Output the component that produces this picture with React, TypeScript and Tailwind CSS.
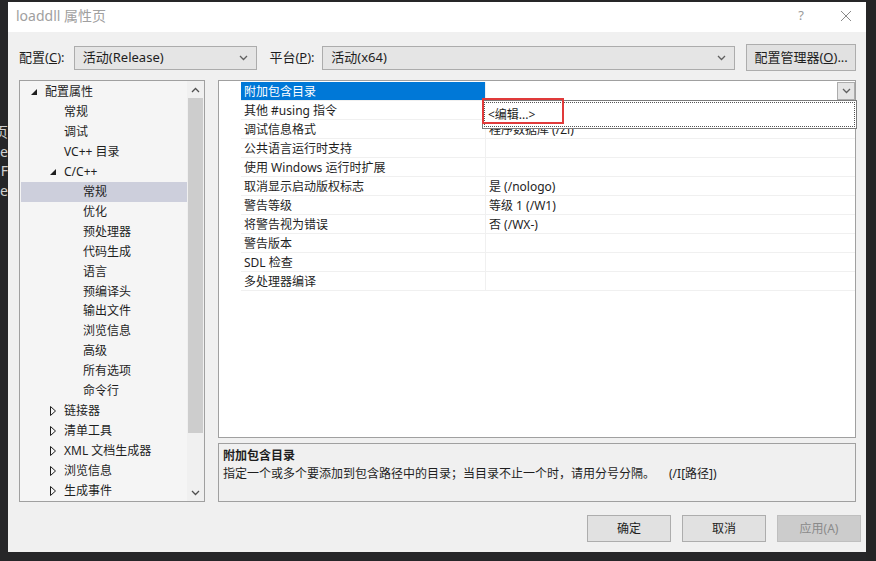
import type { ReactNode } from 'react';

const FONT = { fontFamily: '"Noto Sans", "Noto Sans CJK SC", sans-serif' };

type TreeItem = { label: string; level: number; arrow?: 'open' | 'closed'; selected?: boolean };

const treeItems: TreeItem[] = [
  { label: '配置属性', level: 0, arrow: 'open' },
  { label: '常规', level: 1 },
  { label: '调试', level: 1 },
  { label: 'VC++ 目录', level: 1 },
  { label: 'C/C++', level: 1, arrow: 'open' },
  { label: '常规', level: 2, selected: true },
  { label: '优化', level: 2 },
  { label: '预处理器', level: 2 },
  { label: '代码生成', level: 2 },
  { label: '语言', level: 2 },
  { label: '预编译头', level: 2 },
  { label: '输出文件', level: 2 },
  { label: '浏览信息', level: 2 },
  { label: '高级', level: 2 },
  { label: '所有选项', level: 2 },
  { label: '命令行', level: 2 },
  { label: '链接器', level: 1, arrow: 'closed' },
  { label: '清单工具', level: 1, arrow: 'closed' },
  { label: 'XML 文档生成器', level: 1, arrow: 'closed' },
  { label: '浏览信息', level: 1, arrow: 'closed' },
  { label: '生成事件', level: 1, arrow: 'closed' },
];

const props: { name: string; value?: string }[] = [
  { name: '附加包含目录' },
  { name: '其他 #using 指令' },
  { name: '调试信息格式', value: '程序数据库 (/Zi)' },
  { name: '公共语言运行时支持' },
  { name: '使用 Windows 运行时扩展' },
  { name: '取消显示启动版权标志', value: '是 (/nologo)' },
  { name: '警告等级', value: '等级 1 (/W1)' },
  { name: '将警告视为错误', value: '否 (/WX-)' },
  { name: '警告版本' },
  { name: 'SDL 检查' },
  { name: '多处理器编译' },
];

function Chevron({ up = false, color = '#606060' }: { up?: boolean; color?: string }) {
  return (
    <svg width="9" height="6" viewBox="0 0 9 6">
      <polyline
        points={up ? '1,5 4.5,1.5 8,5' : '1,1 4.5,4.5 8,1'}
        fill="none"
        stroke={color}
        strokeWidth="1.3"
      />
    </svg>
  );
}

function Arrow({ kind }: { kind?: 'open' | 'closed' }) {
  if (kind === 'open') {
    return (
      <svg width="6" height="6" viewBox="0 0 6 6">
        <polygon points="6,0 6,6 0,6" fill="#1e1e1e" />
      </svg>
    );
  }
  if (kind === 'closed') {
    return (
      <svg width="6" height="10" viewBox="0 0 6 10">
        <polygon points="0.5,0.5 5.5,5 0.5,9.5" fill="none" stroke="#1e1e1e" strokeWidth="1" />
      </svg>
    );
  }
  return null;
}

function Combo({ text, width }: { text: string; width: string }) {
  return (
    <div
      className={`${width} h-[24px] flex items-center justify-between bg-[#e5e5e5] border border-[#acacac] pl-[8px] pr-[8px] text-[13px] text-[#1e1e1e]`}
    >
      <span>{text}</span>
      <Chevron />
    </div>
  );
}

function Button({ children, disabled = false }: { children: ReactNode; disabled?: boolean }) {
  return (
    <div
      className={`w-[84px] h-[27px] flex items-center justify-center border text-[12px] ${
        disabled
          ? 'bg-[#cccccc] border-[#bfbfbf] text-[#8a8a8a]'
          : 'bg-[#e1e1e1] border-[#adadad] text-[#1e1e1e]'
      }`}
    >
      {children}
    </div>
  );
}

export default function App() {
  return (
    <div className="w-[876px] h-[561px] bg-[#262628] flex overflow-hidden" style={FONT}>
      {/* 背景中的编辑器残影 */}
      <div className="w-[8px] h-full overflow-hidden flex flex-col items-end pt-[122px] text-[14px] text-[#d0d0d0] leading-[19.5px]">
        <span className="whitespace-nowrap">页</span>
        <span className="whitespace-nowrap">ile</span>
        <span className="whitespace-nowrap">F</span>
        <span className="whitespace-nowrap">e</span>
      </div>

      {/* 属性页对话框 */}
      <div className="mt-[2px] w-[858px] h-[550px] bg-[#f0f0f0] flex flex-col">
        <div className="h-[30px] bg-white flex items-center justify-between pl-[8px] pr-[14px] pb-[3px]">
          <span className="text-[14px] text-[#a0a0a0]">loaddll 属性页</span>
          <div className="flex items-center gap-[36px] text-[#9a9a9a]">
            <span className="text-[13px]">?</span>
            <svg width="12" height="12" viewBox="0 0 12 12">
              <path d="M1 1 L11 11 M11 1 L1 11" stroke="#8a8a8a" strokeWidth="1" />
            </svg>
          </div>
        </div>

        {/* 配置 / 平台 */}
        <div className="mt-[12px] h-[27px] flex items-center pl-[11px] pr-[10px] text-[13px] text-[#1e1e1e]">
          <span className="w-[55px]">
            配置(<span className="underline">C</span>):
          </span>
          <Combo text="活动(Release)" width="w-[184px]" />
          <span className="ml-[12px] w-[53px]">
            平台(<span className="underline">P</span>):
          </span>
          <Combo text="活动(x64)" width="w-[414px]" />
          <div className="ml-[11px] w-[110px] h-[27px] flex items-center justify-center bg-[#e1e1e1] border border-[#adadad]">
            配置管理器(<span className="underline">O</span>)...
          </div>
        </div>

        {/* 主体 */}
        <div className="mt-[9px] h-[422px] flex gap-[13px] pl-[11px] pr-[10px] text-[12px] text-[#1e1e1e]">
          {/* 树 */}
          <div className="w-[186px] h-full bg-[#f5f5f5] border border-[#a0a0a0] flex">
            <div className="flex-1 flex flex-col pt-[1px]">
              {treeItems.map((item, i) => (
                <div
                  key={i}
                  className={`h-[20px] flex items-center ml-[1px] ${item.selected ? 'bg-[#cdcfdc]' : ''}`}
                >
                  <div
                    className={`flex items-center justify-center w-[10px] ${
                      item.level === 0 ? 'ml-[8px]' : item.level === 1 ? 'ml-[27px]' : 'ml-[46px]'
                    }`}
                  >
                    <Arrow kind={item.arrow} />
                  </div>
                  <span className="ml-[6px] whitespace-nowrap">{item.label}</span>
                </div>
              ))}
            </div>
            <div className="w-[17px] h-full bg-[#f0f0f0] flex flex-col items-center">
              <div className="h-[17px] flex items-center justify-center">
                <Chevron up color="#505050" />
              </div>
              <div className="w-[15px] h-[335px] bg-[#cdcdcd]" />
              <div className="flex-1" />
              <div className="h-[17px] flex items-center justify-center">
                <Chevron color="#505050" />
              </div>
            </div>
          </div>

          {/* 右侧 */}
          <div className="flex-1 flex flex-col gap-[5px]">
            <div className="relative h-[358px] bg-white border border-[#a0a0a0] flex flex-col pt-[1px]">
              {props.map((p, i) => (
                <div key={i} className="h-[19px] flex">
                  <div className="w-[22px] bg-white" />
                  <div
                    className={`w-[244px] flex items-center pl-[3px] pt-[1px] border-b border-[#f0f0f0] ${
                      i === 0 ? 'bg-[#0078d7] text-white' : ''
                    }`}
                  >
                    {p.name}
                  </div>
                  <div className="flex-1 flex items-center pl-[3px] pt-[1px] border-b border-l border-[#f0f0f0] whitespace-nowrap">
                    {i === 0 ? (
                      <div className="flex-1 h-full flex justify-end">
                        <div className="w-[18px] h-[18px] -mt-[1px] bg-[#e5e5e5] border border-[#acacac] flex items-center justify-center">
                          <Chevron />
                        </div>
                      </div>
                    ) : (
                      p.value
                    )}
                  </div>
                </div>
              ))}

              {/* 下拉列表 */}
              <div className="absolute left-[263px] top-[19px] w-[375px] h-[29px] bg-white border border-[#7a7a7a] p-[1px]">
                <div className="h-full border border-dotted border-[#555555] flex items-center pl-[3px] text-[12px] leading-none">
                  &lt;编辑...&gt;
                </div>
              </div>
              <div className="absolute left-[263px] top-[17px] w-[82px] h-[26px] border-2 border-[#e03a3a]" />
            </div>

            <div className="h-[59px] bg-[#f0f0f0] border border-[#a0a0a0] pl-[4px] pt-[3px] flex flex-col">
              <span className="font-bold leading-[18px]">附加包含目录</span>
              <span className="leading-[18px] whitespace-nowrap">
                指定一个或多个要添加到包含路径中的目录；当目录不止一个时，请用分号分隔。
                <span className="ml-[14px]">(/I[路径])</span>
              </span>
            </div>
          </div>
        </div>

        {/* 按钮 */}
        <div className="mt-[13px] flex justify-end gap-[11px] pr-[5px]">
          <Button>确定</Button>
          <Button>取消</Button>
          <Button disabled>应用(A)</Button>
        </div>
      </div>

      <div className="flex-1 h-full bg-[#252526]" />
    </div>
  );
}
